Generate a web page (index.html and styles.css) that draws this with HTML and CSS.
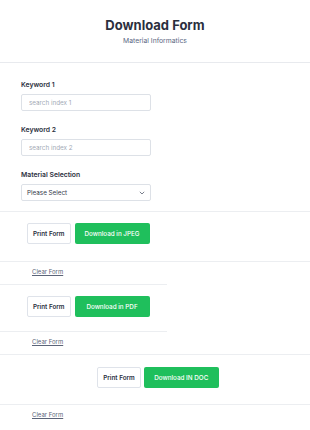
FILE: index.html
```html
<!DOCTYPE html>
<html lang="en">
<head>
    <meta charset="UTF-8">
    <meta name="viewport" content="width=device-width, initial-scale=1.0">
    <title>Download Form</title>
    <link rel="stylesheet" href="styles.css">
</head>
<body>

    <div class="header">
        <h1 class="title">Download Form</h1>
        <div class="subtitle">Material Informatics</div>
    </div>

    <div class="form">
        <div class="field">
            <label>Keyword 1</label>
            <input type="text" placeholder="search index 1">
        </div>
        <div class="field">
            <label>Keyword 2</label>
            <input type="text" placeholder="search index 2">
        </div>
        <div class="field">
            <label>Material Selection</label>
            <div class="select">
                <span>Please Select</span>
                <svg width="6" height="4" viewBox="0 0 6 4"><path d="M0.8 0.8 L3 3 L5.2 0.8" fill="none" stroke="#6b7280" stroke-width="0.9"/></svg>
            </div>
        </div>
    </div>

    <div class="section">
        <div class="actions">
            <button class="btn-print">Print Form</button>
            <button class="btn-download">Download in JPEG</button>
        </div>
        <div class="clear"><a href="#">Clear Form</a></div>
    </div>

    <div class="section narrow">
        <div class="actions">
            <button class="btn-print">Print Form</button>
            <button class="btn-download">Download in PDF</button>
        </div>
        <div class="clear"><a href="#">Clear Form</a></div>
    </div>

    <div class="section">
        <div class="actions center">
            <button class="btn-print">Print Form</button>
            <button class="btn-download">Download IN DOC</button>
        </div>
        <div class="clear"><a href="#">Clear Form</a></div>
    </div>

</body>
</html>
```

FILE: styles.css
```css
body {
    margin: 0;
    font-family: Inter, "Noto Sans", sans-serif;
    color: #2b2f3e;
    background: #fff;
}

.header {
    text-align: center;
    padding: 17px 0 16px 0;
    border-bottom: 1px solid #e8eaee;
}

.title {
    margin: 0;
    font-size: 13px;
    line-height: 16px;
    font-weight: 700;
    color: #2b2f3e;
}

.subtitle {
    margin-top: 3px;
    font-size: 6.8px;
    line-height: 10px;
    color: #5a6783;
}

.form {
    padding: 17px 21px 10px 21px;
}

.field {
    margin-bottom: 14px;
}

.field:last-child {
    margin-bottom: 0;
}

.field label {
    display: block;
    font-size: 6.8px;
    line-height: 10px;
    font-weight: 600;
    margin-bottom: 4px;
    color: #2b2f3e;
}

.field input,
.select {
    display: block;
    box-sizing: border-box;
    width: 130px;
    height: 17px;
    border: 1px solid #dde1e7;
    border-radius: 2px;
    padding: 0 7px;
    font-family: inherit;
    font-size: 6.3px;
    color: #2b2f3e;
    background: #fff;
    outline: none;
}

.field input::placeholder {
    color: #a3aab6;
}

.select {
    display: flex;
    align-items: center;
    justify-content: space-between;
    padding: 0 5px 0 5px;
    color: #33384a;
}

.section {
    border-top: 1px solid #eceef1;
}

.section.narrow {
    width: 167px;
}

.actions {
    display: flex;
    gap: 4px;
    padding: 11px 27px 17px 27px;
    border-bottom: 1px solid #eceef1;
}

.narrow .actions {
    padding-right: 0;
    padding-bottom: 14px;
}

.actions.center {
    justify-content: center;
    gap: 3px;
    padding: 12px 0 16px 6px;
}

.btn-print {
    height: 21px;
    padding: 0 5px;
    border: 1px solid #dfe3ea;
    border-radius: 2px;
    background: #fff;
    font-family: inherit;
    font-size: 6.3px;
    font-weight: 600;
    color: #2b2f3e;
    white-space: nowrap;
}

.btn-download {
    height: 21px;
    width: 75px;
    border: none;
    border-radius: 2px;
    background: #1fbf5c;
    font-family: inherit;
    font-size: 6.3px;
    font-weight: 500;
    color: #fff;
    white-space: nowrap;
}

.clear {
    height: 22px;
    padding-left: 32px;
    font-size: 6px;
    line-height: 19px;
}

.clear a {
    color: #5b6478;
}
```
